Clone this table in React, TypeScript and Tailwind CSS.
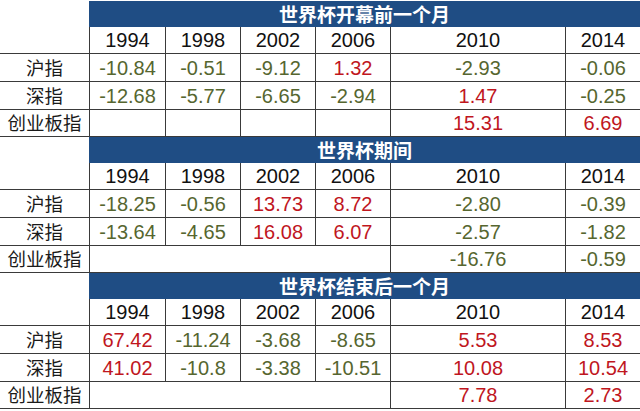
import React from "react";

type Val = { v: string; up: boolean } | null;

const years = ["1994", "1998", "2002", "2006", "2010", "2014"];

const sections: {
  title: string;
  sh: Val[];
  sz: Val[];
  cy: Val[];
  merged: boolean;
}[] = [
  {
    title: "世界杯开幕前一个月",
    sh: [
      { v: "-10.84", up: false },
      { v: "-0.51", up: false },
      { v: "-9.12", up: false },
      { v: "1.32", up: true },
      { v: "-2.93", up: false },
      { v: "-0.06", up: false },
    ],
    sz: [
      { v: "-12.68", up: false },
      { v: "-5.77", up: false },
      { v: "-6.65", up: false },
      { v: "-2.94", up: false },
      { v: "1.47", up: true },
      { v: "-0.25", up: false },
    ],
    cy: [null, null, null, null, { v: "15.31", up: true }, { v: "6.69", up: true }],
    merged: false,
  },
  {
    title: "世界杯期间",
    sh: [
      { v: "-18.25", up: false },
      { v: "-0.56", up: false },
      { v: "13.73", up: true },
      { v: "8.72", up: true },
      { v: "-2.80", up: false },
      { v: "-0.39", up: false },
    ],
    sz: [
      { v: "-13.64", up: false },
      { v: "-4.65", up: false },
      { v: "16.08", up: true },
      { v: "6.07", up: true },
      { v: "-2.57", up: false },
      { v: "-1.82", up: false },
    ],
    cy: [null, null, null, null, { v: "-16.76", up: false }, { v: "-0.59", up: false }],
    merged: true,
  },
  {
    title: "世界杯结束后一个月",
    sh: [
      { v: "67.42", up: true },
      { v: "-11.24", up: false },
      { v: "-3.68", up: false },
      { v: "-8.65", up: false },
      { v: "5.53", up: true },
      { v: "8.53", up: true },
    ],
    sz: [
      { v: "41.02", up: true },
      { v: "-10.8", up: false },
      { v: "-3.38", up: false },
      { v: "-10.51", up: false },
      { v: "10.08", up: true },
      { v: "10.54", up: true },
    ],
    cy: [null, null, null, null, { v: "7.78", up: true }, { v: "2.73", up: true }],
    merged: true,
  },
];

const num = "font-['Liberation_Sans',sans-serif] text-[20px]";
const label =
  "font-['Noto_Sans_CJK_SC',sans-serif] text-[18.5px] text-[#1a1a1a] flex items-center justify-center border-b border-[#3a3a3a]";
const cell = "flex items-center justify-center border-l border-b border-[#3a3a3a]";

function ValCell({ d }: { d: Val }) {
  return (
    <div className={`${cell} ${num} ${d?.up ? "text-[#c0161e]" : "text-[#56662f]"}`}>
      {d ? d.v : ""}
    </div>
  );
}

export default function App() {
  return (
    <div className="w-[640px] h-[411px] bg-white pt-px overflow-hidden">
      {sections.map((s, i) => (
        <div
          key={i}
          className="grid grid-cols-[89px_76px_75px_75px_75px_175px_75px] grid-rows-[26px_27px_28px_28px_27px]"
        >
          <div className="row-span-2 border-b border-[#3a3a3a]" />
          <div className="col-span-6 bg-[#1f4d84] flex items-center justify-center text-white font-bold font-['Noto_Sans_CJK_SC',sans-serif] text-[19px]">
            {s.title}
          </div>
          {years.map((y) => (
            <div key={y} className={`${cell} ${num} text-[#111]`}>
              {y}
            </div>
          ))}
          <div className={label}>沪指</div>
          {s.sh.map((d, j) => (
            <ValCell key={j} d={d} />
          ))}
          <div className={label}>深指</div>
          {s.sz.map((d, j) => (
            <ValCell key={j} d={d} />
          ))}
          <div className={label}>创业板指</div>
          {s.merged ? (
            <>
              <div className={`${cell} col-span-4`} />
              <ValCell d={s.cy[4]} />
              <ValCell d={s.cy[5]} />
            </>
          ) : (
            s.cy.map((d, j) => <ValCell key={j} d={d} />)
          )}
        </div>
      ))}
    </div>
  );
}
